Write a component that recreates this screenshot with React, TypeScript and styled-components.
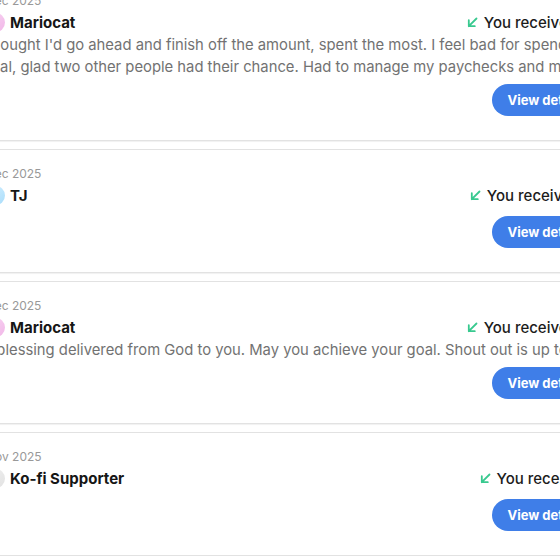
import React from "react";
import styled, {createGlobalStyle} from "styled-components";

type Tip = {
  date: string;
  name: string;
  avatar: string;
  amount: string;
  lines: string[];
};

const tips: Tip[] = [
  {
    date: "Dec 2025",
    name: "Mariocat",
    avatar: "linear-gradient(135deg, #f9d7f3, #f1b7e8)",
    amount: "$5",
    lines: [
      "Thought I'd go ahead and finish off the amount, spent the most. I feel bad for spending it all at once on this",
      "goal, glad two other people had their chance. Had to manage my paychecks and make it work this month.",
    ],
  },
  {
    date: "Dec 2025",
    name: "TJ",
    avatar: "linear-gradient(135deg, #d8f1ff, #a9ddfb)",
    amount: "$1",
    lines: [],
  },
  {
    date: "Dec 2025",
    name: "Mariocat",
    avatar: "linear-gradient(135deg, #f9d7f3, #f1b7e8)",
    amount: "$3",
    lines: [
      "A blessing delivered from God to you. May you achieve your goal. Shout out is up to you.",
    ],
  },
  {
    date: "Nov 2025",
    name: "Ko-fi Supporter",
    avatar: "linear-gradient(135deg, #f1f1f1, #e2e2e2)",
    amount: "1",
    lines: [],
  },
];

const GlobalStyle = createGlobalStyle`
  html, body {
    margin: 0;
    padding: 0;
    background: #ffffff;
    overflow: hidden;
  }
  body {
    font-family: Inter, "Noto Sans", sans-serif;
  }
`;

const List = styled.div`
  display: flex;
  flex-direction: column;
  gap: 8px;
  width: 648px;
  margin: -24px 0 0 -31px;
`;

const Card = styled.div`
  display: flex;
  flex-direction: column;
  border: 1px solid #e2e2e2;
  border-radius: 6px;
  background: #fff;
  box-shadow: 0 1px 1px rgba(0, 0, 0, 0.06);
  padding: 16px 16px 24px;
`;

const DateText = styled.div`
  font-size: 12px;
  line-height: 16px;
  color: #999999;
`;

const TopRow = styled.div<{$bare: boolean}>`
  display: flex;
  align-items: center;
  justify-content: space-between;
  height: 22px;
  margin-top: 2px;
  margin-bottom: ${(p) => (p.$bare ? "4px" : "0")};
`;

const Who = styled.div`
  display: flex;
  align-items: center;
  gap: 5px;
`;

const Avatar = styled.div<{$bg: string}>`
  width: 19px;
  height: 19px;
  border-radius: 50%;
  background: ${(p) => p.$bg};
`;

const Name = styled.div`
  font-size: 15px;
  font-weight: 700;
  color: #161616;
`;

const Received = styled.div`
  display: flex;
  align-items: center;
  gap: 6px;
  font-size: 15px;
  font-weight: 500;
  color: #1c1c1c;
  white-space: nowrap;
`;

const Message = styled.div`
  margin: 1px 0 0 -4px;
  font-size: 14.8px;
  line-height: 22px;
  color: #727272;
  white-space: nowrap;
`;

const Actions = styled.div`
  display: flex;
  justify-content: flex-end;
  margin-top: 6px;
`;

const Button = styled.button`
  height: 32px;
  padding: 0 15px;
  border: none;
  border-radius: 16px;
  background: #3f7ee8;
  color: #fff;
  font-family: Inter, "Noto Sans", sans-serif;
  font-size: 13px;
  font-weight: 700;
  white-space: nowrap;
`;

const InArrow = () => (
  <svg width="11" height="11" viewBox="0 0 11 11" fill="none">
    <path d="M9.5 1.5 L1.8 9.2 M1.8 3.2 V9.2 H7.8" stroke="#38c98f" strokeWidth="1.8"
      strokeLinecap="round" strokeLinejoin="round"/>
  </svg>
);

const TipCard: React.FC<{tip: Tip}> = ({tip}) => {
  const bare = tip.lines.length === 0;
  return (
    <Card>
      <DateText>{tip.date}</DateText>
      <TopRow $bare={bare}>
        <Who>
          <Avatar $bg={tip.avatar}/>
          <Name>{tip.name}</Name>
        </Who>
        <Received>
          <InArrow/>
          <span>You received {tip.amount}</span>
        </Received>
      </TopRow>
      {!bare && (
        <Message>
          {tip.lines.map((l, i) => <div key={i}>{l}</div>)}
        </Message>
      )}
      <Actions>
        <Button>View details</Button>
      </Actions>
    </Card>
  );
};

export default function App() {
  return (
    <>
      <GlobalStyle/>
      <List>
        {tips.map((t, i) => <TipCard key={i} tip={t}/>)}
      </List>
    </>
  );
}
